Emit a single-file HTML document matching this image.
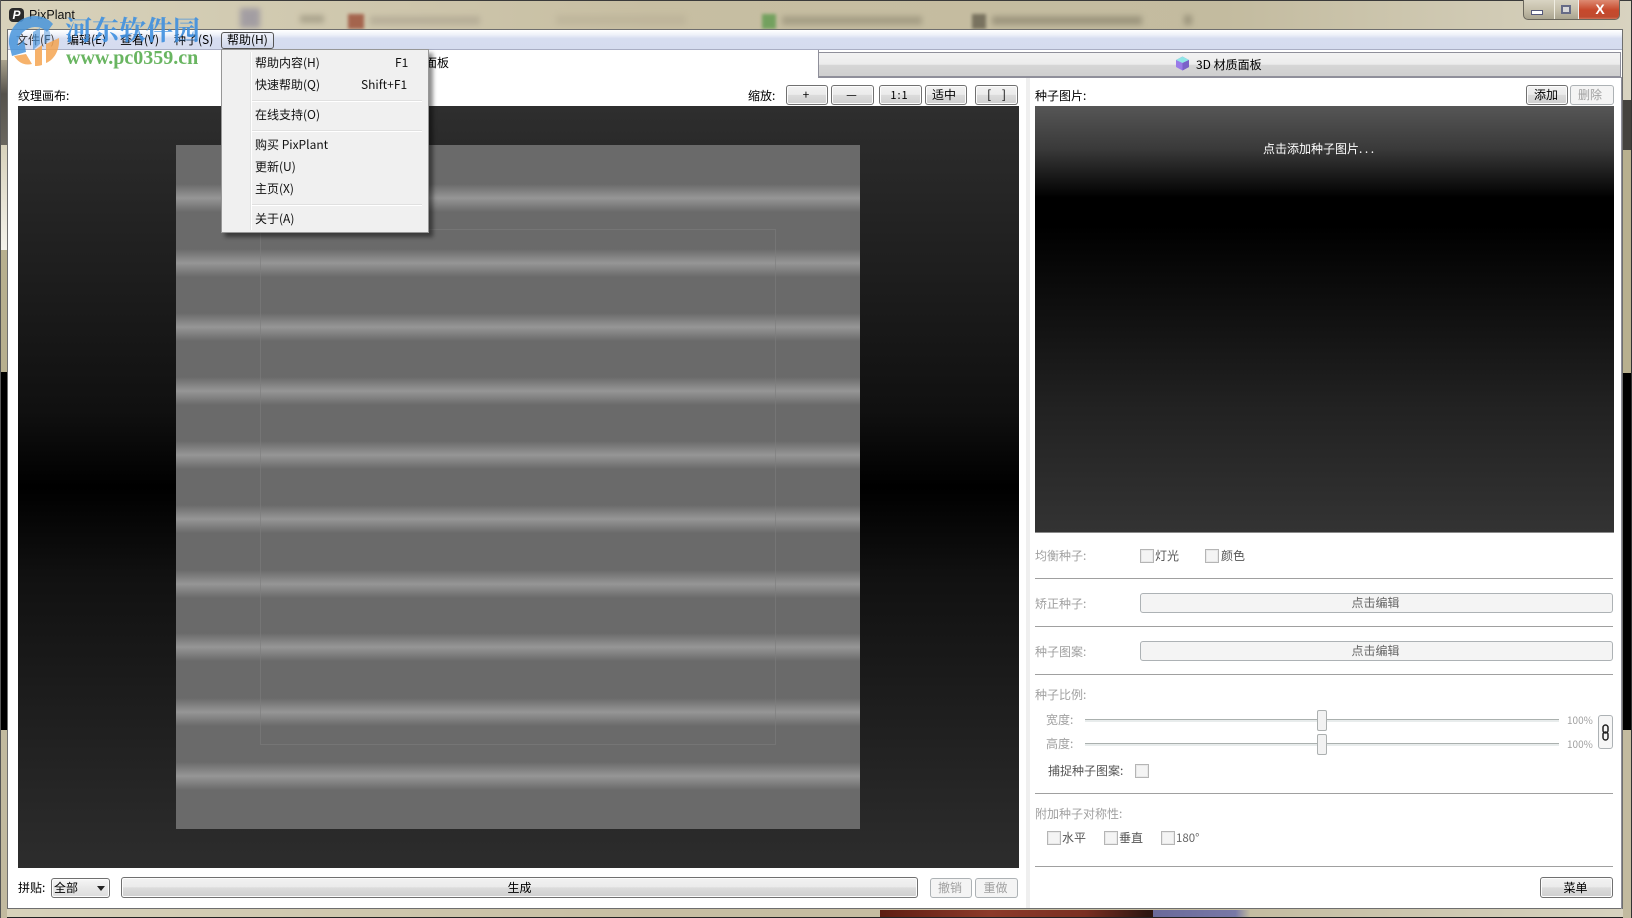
<!DOCTYPE html>
<html><head><meta charset="utf-8"><style>
html,body{margin:0;padding:0;width:1632px;height:918px;overflow:hidden;background:#c9c1a8}
*{box-sizing:border-box}
body{position:relative;font:12px/16px "WenQuanYi Zen Hei","Noto Sans CJK SC","Liberation Sans",sans-serif;color:#000}
.a{position:absolute}
.t{position:absolute;white-space:nowrap;height:16px;line-height:16px}
.g{color:#a0a0a0}
.b{position:absolute;border:1px solid #707070;border-radius:3px;background:linear-gradient(#f2f2f2 0,#ebebeb 48%,#dcdcdc 50%,#cfcfcf 100%);text-align:center;line-height:18px;box-shadow:inset 0 0 0 1px #fcfcfc;padding-right:2px}
.d{border-color:#adb2b5;background:#f4f4f4;color:#a0a0a0;box-shadow:none}
.c{position:absolute;width:14px;height:14px;border:1px solid #b5b5b5;background:#f4f4f4;box-shadow:inset 0 0 0 1px #e8e8e8}
.h{position:absolute;left:1035px;width:578px;height:1px;background:#a0a0a0}
.m{position:absolute;left:255px;white-space:nowrap;font-family:"Noto Sans CJK SC","Liberation Sans",sans-serif;height:16px;line-height:16px;color:#111}
.s{position:absolute;width:170px;height:2px;background:#e0e0e0;border-bottom:1px solid #fff}
.st{position:absolute;left:176px;width:684px;height:28px;background:linear-gradient(rgba(150,150,150,0),rgba(150,150,150,1) 50%,rgba(150,150,150,0))}
.bl{position:absolute;filter:blur(3px);opacity:.55}
</style></head><body>
<!-- window frame background -->
<div class="a" style="left:0;top:0;width:1632px;height:918px;background:linear-gradient(90deg,#d8d2bb,#c7bea2 40%,#c3bb9f 75%,#d8d3c0)"></div>
<div class="a" style="left:0;top:0;width:1632px;height:1px;background:#3a3a3a"></div>
<div class="a" style="left:0;top:917px;width:1632px;height:1px;background:#222"></div>
<!-- left border pieces -->
<div class="a" style="left:0;top:60px;width:7px;height:85px;background:linear-gradient(#a9a28d,#55524c 40%,#6a675f)"></div>
<div class="a" style="left:0;top:145px;width:7px;height:105px;background:linear-gradient(#d8d2bb,#f4f2ea)"></div>
<div class="a" style="left:0;top:250px;width:7px;height:122px;background:#b8b08f"></div>
<div class="a" style="left:0;top:372px;width:7px;height:358px;background:#000"></div>
<div class="a" style="left:0;top:730px;width:7px;height:188px;background:#c2ba9f"></div>
<div class="a" style="left:0;top:0;width:1px;height:918px;background:#555"></div>
<!-- right border pieces -->
<div class="a" style="left:1623px;top:100px;width:9px;height:50px;background:#44423d"></div>
<div class="a" style="left:1623px;top:150px;width:9px;height:223px;background:#b8b08f"></div>
<div class="a" style="left:1623px;top:373px;width:9px;height:357px;background:#000"></div>
<div class="a" style="left:1623px;top:730px;width:9px;height:188px;background:#c2ba9f"></div>
<div class="a" style="left:1631px;top:0;width:1px;height:918px;background:#333"></div>
<!-- blurred taskbar reflections -->
<div class="a" style="left:880px;top:910px;width:273px;height:7px;background:linear-gradient(90deg,#5e1d12,#8c3a2a 40%,#7a2f22 75%,#2d1510 98%)"></div>
<div class="a" style="left:1153px;top:910px;width:97px;height:7px;background:linear-gradient(90deg,#6a6a9a,#7878a6 85%,#c2ba9f)"></div>
<div class="bl" style="left:240px;top:8px;width:20px;height:20px;background:#7d7a96"></div>
<div class="bl" style="left:300px;top:15px;width:24px;height:8px;background:#8f8974"></div>
<div class="bl" style="left:348px;top:14px;width:16px;height:15px;background:#9a4c36;opacity:.8;filter:blur(1.5px)"></div>
<div class="bl" style="left:370px;top:16px;width:110px;height:9px;background:#a89f8c"></div>
<div class="bl" style="left:556px;top:15px;width:130px;height:10px;background:#b8af96"></div>
<div class="bl" style="left:762px;top:14px;width:14px;height:15px;background:#5f9a4e;opacity:.8;filter:blur(1.5px)"></div>
<div class="bl" style="left:782px;top:16px;width:140px;height:9px;background:#8d8770"></div>
<div class="bl" style="left:972px;top:14px;width:14px;height:15px;background:#66604f;opacity:.8;filter:blur(1.5px)"></div>
<div class="bl" style="left:992px;top:16px;width:150px;height:9px;background:#7f7964"></div>
<div class="bl" style="left:1184px;top:15px;width:8px;height:10px;background:#7f7964"></div>
<!-- title -->
<div class="a" style="left:9px;top:8px;width:15px;height:14px;background:#2b2b2b;border-radius:4px;color:#fff;font:italic bold 12px/14px 'Liberation Sans',sans-serif;text-align:center">P</div>
<div class="t" style="left:29px;top:7px;font-family:'Liberation Sans',sans-serif;font-size:12.5px;color:#111">PixPlant</div>
<!-- caption buttons -->
<div class="a" style="left:1523px;top:0;width:97px;height:20px;border:1px solid #6b675c;border-top:0;border-radius:0 0 5px 5px;overflow:hidden;background:linear-gradient(#d9d4c3,#c6c0ab 50%,#a9a490)">
 <div class="a" style="left:30px;top:0;width:1px;height:20px;background:#f0ede2"></div>
 <div class="a" style="left:7px;top:10px;width:12px;height:5px;background:#fff;border:1px solid #55597a"></div>
 <div class="a" style="left:37px;top:5px;width:10px;height:9px;border:2px solid #666b86;background:#d8d8d8"></div>
 <div class="a" style="left:54px;top:0;width:43px;height:20px;background:linear-gradient(#dd8b73,#c7492c 50%,#c04a2f 85%,#d78a6e);color:#fff;font:bold 14px/18px 'Liberation Sans',sans-serif;text-align:center;border-left:1px solid #eee">X</div>
</div>
<!-- client -->
<div class="a" style="left:7px;top:29px;width:1616px;height:880px;background:#fff;border:1px solid #6e6e6e"></div>
<div class="a" style="left:8px;top:30px;width:1614px;height:20px;background:linear-gradient(#fff 0,#eef1f9 25%,#d6ddf0 45%,#d5dcef 100%);border-bottom:1px solid #a9aec4"></div>
<!-- menu bar -->
<div class="t" style="left:16px;top:32px;color:#333">文件(F)</div>
<div class="t" style="left:67px;top:32px">编辑(E)</div>
<div class="t" style="left:120px;top:32px">查看(V)</div>
<div class="t" style="left:174px;top:32px">种子(S)</div>
<div class="a" style="left:221px;top:32px;width:53px;height:17px;border:1px solid #555;border-radius:3px;background:linear-gradient(#eef1f9,#cfd6ea)"></div>
<div class="t" style="left:227px;top:32px">帮助(H)</div>
<!-- tabs -->
<div class="t" style="left:425px;top:55px">面板</div>
<div class="a" style="left:818px;top:52px;width:803px;height:25px;border:1px solid #8f8f9a;background:linear-gradient(#f2f2f2,#ececec 50%,#d6d6d6 52%,#cfcfcf)"></div>
<div class="a" style="left:818px;top:50px;width:1px;height:28px;background:#8f8f9a"></div>
<svg class="a" style="left:1175px;top:56px" width="15" height="15" viewBox="0 0 15 15"><path d="M7.5 0.5 14 4 14 11 7.5 14.5 1 11 1 4Z" fill="#9a7be8"/><path d="M7.5 0.5 14 4 7.5 7 1 4Z" fill="#8fe6e6"/><path d="M7.5 7V14.5L14 11V4Z" fill="#7a62c8"/></svg>
<div class="t" style="left:1196px;top:57px">3D 材质面板</div>
<div class="a" style="left:1621px;top:77px;width:1px;height:832px;background:#8f8f9a"></div>
<div class="a" style="left:819px;top:77px;width:802px;height:1px;background:#8f8f9a"></div>
<div class="a" style="left:1026px;top:78px;width:4px;height:830px;background:#efefef"></div>
<!-- left header -->
<div class="t" style="left:18px;top:88px">纹理画布:</div>
<div class="t" style="left:748px;top:88px">缩放:</div>
<div class="b" style="left:786px;top:85px;width:42px;height:20px">+</div>
<div class="b" style="left:831px;top:85px;width:43px;height:20px">—</div>
<div class="b" style="left:879px;top:85px;width:43px;height:20px;font-size:11px;letter-spacing:1px">1:1</div>
<div class="b" style="left:925px;top:85px;width:42px;height:20px;padding-right:4px">适中</div>
<div class="b" style="left:975px;top:85px;width:43px;height:20px;padding-right:0">[ &nbsp;&nbsp; ]</div>
<!-- canvas -->
<div class="a" style="left:18px;top:106px;width:1001px;height:762px;background:linear-gradient(#2e2e2e,#101010 40%,#000 50%,#111 62%,#2d2d2d)"></div>
<div class="a" style="left:176px;top:145px;width:684px;height:684px;background:#6a6a6a"></div>
<div class="st" style="top:184px"></div><div class="st" style="top:249px"></div><div class="st" style="top:313px"></div><div class="st" style="top:377px"></div><div class="st" style="top:441px"></div><div class="st" style="top:505px"></div><div class="st" style="top:570px"></div><div class="st" style="top:633px"></div><div class="st" style="top:698px"></div><div class="st" style="top:762px"></div>
<div class="a" style="left:260px;top:229px;width:516px;height:516px;border:1px solid rgba(125,125,125,.6)"></div>
<!-- bottom bar -->
<div class="t" style="left:18px;top:880px">拼贴:</div>
<div class="b" style="left:51px;top:878px;width:59px;height:20px;text-align:left;padding-left:2px;background:linear-gradient(#f6f6f6,#e8e8e8 50%,#dcdcdc)">全部<span class="a" style="left:45px;top:7px;width:0;height:0;border:4px solid transparent;border-top:5px solid #222"></span></div>
<div class="b" style="left:121px;top:877px;width:797px;height:21px;line-height:20px;padding-right:0">生成</div>
<div class="b d" style="left:930px;top:878px;width:42px;height:20px">撤销</div>
<div class="b d" style="left:975px;top:878px;width:43px;height:20px">重做</div>
<!-- right header -->
<div class="t" style="left:1035px;top:88px">种子图片:</div>
<div class="b" style="left:1526px;top:85px;width:42px;height:20px">添加</div>
<div class="b d" style="left:1570px;top:85px;width:44px;height:20px;padding-right:4px">删除</div>
<div class="a" style="left:1035px;top:106px;width:579px;height:427px;background:linear-gradient(#565656,#3a3a3a 10%,#000 21.5%,#000 28%,#111 50%,#212121 70%,#333);border-bottom:1px solid #8a8a8a"></div>
<div class="t" style="left:1263px;top:141px;color:#fff">点击添加种子图片<span style="letter-spacing:2.5px">...</span></div>
<!-- right controls -->
<div class="t g" style="left:1035px;top:548px">均衡种子:</div>
<div class="c" style="left:1140px;top:549px"></div><div class="t" style="left:1155px;top:548px;color:#555">灯光</div>
<div class="c" style="left:1205px;top:549px"></div><div class="t" style="left:1221px;top:548px;color:#555">颜色</div>
<div class="h" style="top:578px"></div>
<div class="t g" style="left:1035px;top:596px">矫正种子:</div>
<div class="b d" style="left:1140px;top:593px;width:473px;height:20px;color:#666">点击编辑</div>
<div class="h" style="top:626px"></div>
<div class="t g" style="left:1035px;top:644px">种子图案:</div>
<div class="b d" style="left:1140px;top:641px;width:473px;height:20px;color:#666">点击编辑</div>
<div class="h" style="top:674px"></div>
<div class="t g" style="left:1035px;top:687px">种子比例:</div>
<div class="t g" style="left:1046px;top:712px">宽度:</div>
<div class="a" style="left:1085px;top:719px;width:474px;height:3px;background:#e8ecec;border-top:1px solid #aab0ae"></div>
<div class="a" style="left:1317px;top:710px;width:10px;height:21px;border:1px solid #acb0b0;border-radius:2px;background:#f2f2f2"></div>
<div class="t g" style="left:1567px;top:712px;font-size:10px">100%</div>
<div class="t g" style="left:1046px;top:736px">高度:</div>
<div class="a" style="left:1085px;top:743px;width:474px;height:3px;background:#e8ecec;border-top:1px solid #aab0ae"></div>
<div class="a" style="left:1317px;top:734px;width:10px;height:21px;border:1px solid #acb0b0;border-radius:2px;background:#f2f2f2"></div>
<div class="t g" style="left:1567px;top:736px;font-size:10px">100%</div>
<div class="a" style="left:1598px;top:715px;width:15px;height:34px;border:1px solid #adb2b5;border-radius:3px;background:#f6f6f6"></div>
<svg class="a" style="left:1601px;top:724px" width="9" height="17" viewBox="0 0 9 17"><rect x="2" y="1" width="5" height="8" rx="2.5" fill="none" stroke="#222" stroke-width="1.5"/><rect x="2" y="8" width="5" height="8" rx="2.5" fill="none" stroke="#222" stroke-width="1.5"/></svg>
<div class="t" style="left:1048px;top:763px;color:#555">捕捉种子图案:</div>
<div class="c" style="left:1135px;top:764px"></div>
<div class="h" style="top:793px"></div>
<div class="t g" style="left:1035px;top:806px">附加种子对称性:</div>
<div class="c" style="left:1047px;top:831px"></div><div class="t" style="left:1062px;top:830px;color:#555">水平</div>
<div class="c" style="left:1104px;top:831px"></div><div class="t" style="left:1119px;top:830px;color:#555">垂直</div>
<div class="c" style="left:1161px;top:831px"></div><div class="t" style="left:1176px;top:830px;color:#666;font-size:11.5px">180°</div>
<div class="h" style="top:866px"></div>
<div class="b" style="left:1540px;top:877px;width:73px;height:21px;line-height:20px">菜单</div>
<!-- watermark -->
<svg class="a" style="left:6px;top:14px;opacity:.85" width="56" height="54" viewBox="0 0 56 54"><path d="M3 30 C2 14 14 2 29 2 C36 2 43 5 47 10 L41 18 C36 13 30 12 24 14 C15 17 11 25 12 32 L18 26 L20 38 L6 42 Z" fill="#4a96dc"/><path d="M27 18 L34 14 L34 30 L27 36Z" fill="#4a96dc" opacity=".75"/><path d="M38 12 C44 16 45 18 44 26 L38 30Z" fill="#4a96dc" opacity=".55"/><path d="M8 42 L20 40 L26 50 C18 52 12 48 8 42Z" fill="#f5a552"/><path d="M29 36 L36 31 L36 51 C33 52 31 52 29 52Z" fill="#f5a552"/><path d="M40 30 L53 24 C54 36 48 46 40 49Z" fill="#f5a552"/></svg>
<div class="t" style="left:65px;top:13px;height:32px;font:bold 27px/32px 'Noto Serif CJK SC',serif;color:#3f90e0;opacity:.9">河东软件园</div>
<div class="t" style="left:66px;top:47px;height:22px;font:bold 20px/22px 'Liberation Serif',serif;color:#69b561">www.pc0359.cn</div>
<!-- help menu -->
<div class="a" style="left:221px;top:49px;width:208px;height:184px;background:#f0f0f0;border:1px solid #979797;box-shadow:4px 4px 4px rgba(0,0,0,.45)">
 <div class="a" style="left:28px;top:2px;width:2px;height:178px;background:#e2e3e3;border-right:1px solid #fff"></div>
</div>
<div class="m" style="top:55px">帮助内容(H)</div><div class="m" style="left:395px;top:55px">F1</div>
<div class="m" style="top:77px">快速帮助(Q)</div><div class="m" style="left:361px;top:77px">Shift+F1</div>
<div class="s" style="left:252px;top:100px"></div>
<div class="m" style="top:107px">在线支持(O)</div>
<div class="s" style="left:252px;top:130px"></div>
<div class="m" style="top:137px">购买 PixPlant</div>
<div class="m" style="top:159px">更新(U)</div>
<div class="m" style="top:181px">主页(X)</div>
<div class="s" style="left:252px;top:204px"></div>
<div class="m" style="top:211px">关于(A)</div>
</body></html>
